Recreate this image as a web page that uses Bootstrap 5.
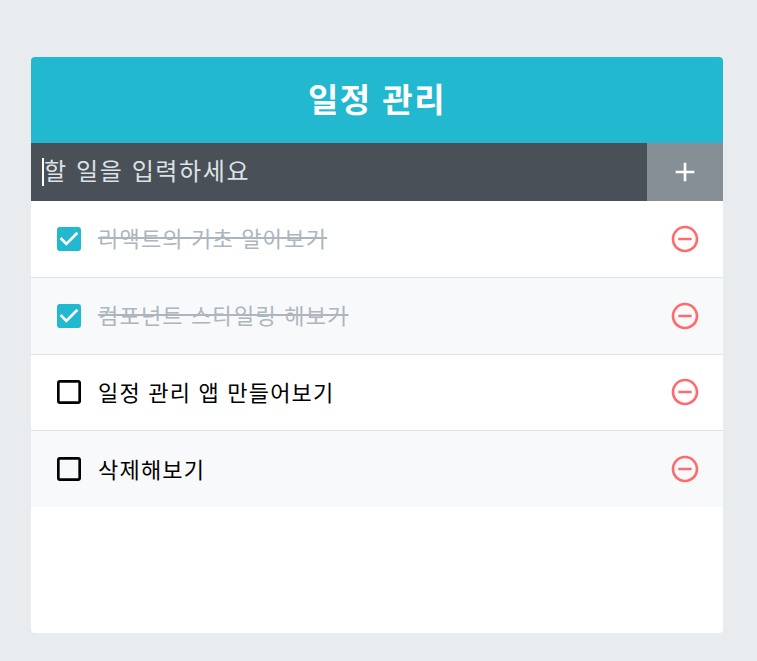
<!DOCTYPE html>
<html lang="ko">
<head>
    <meta charset="UTF-8">
    <meta name="viewport" content="width=device-width, initial-scale=1.0">
    <title>일정 관리</title>
    <link href="https://cdn.jsdelivr.net/npm/bootstrap@5.3.0/dist/css/bootstrap.min.css" rel="stylesheet">
    <style>
        html, body { height: 100%; }
        body {
            background: #e9ecef;
            font-family: "Noto Sans CJK KR", "Liberation Sans", sans-serif;
            overflow: hidden;
        }
        .todo-wrap {
            width: 692px;
            height: 576px;
            margin: 57px 0 0 31px;
            background: #fff;
            border-radius: 4px;
            overflow: hidden;
        }
        .todo-title {
            height: 86px;
            padding-bottom: 3px;
            background: #22b8cf;
            font-size: 33px;
            font-weight: 700;
            letter-spacing: 1.5px;
        }
        .todo-form { height: 58px; background: #495057; }
        .todo-input {
            padding: 0 0 5px 11px;
            font-size: 24px;
            color: #dee2e6;
            letter-spacing: 1.6px;
        }
        .caret-bar { width: 2px; height: 28px; background: #fff; margin: 5px 0 0 0; }
        .add-btn {
            width: 76px;
            padding: 0;
            background: #868e96;
            border: 0;
            border-radius: 0;
        }
        .todo-row { height: 76.75px; padding: 0 22px 0 22px; border-bottom: 1px solid #dee2e6; }
        .todo-row:nth-child(even) { background: #f8f9fa; }
        .todo-row:last-child { height: 75.75px; border-bottom: 0; }
        .todo-text { margin-left: 13px; padding-bottom: 2px; font-size: 22px; color: #000; letter-spacing: 1.2px; }
        .is-done .todo-text { color: #adb5bd; text-decoration: line-through; }
    </style>
</head>
<body>
<div class="todo-wrap">
    <div class="todo-title text-white d-flex align-items-center justify-content-center">일정 관리</div>
    <div class="todo-form d-flex">
        <div class="todo-input flex-grow-1 d-flex align-items-center"><span class="caret-bar"></span>할 일을 입력하세요</div>
        <button class="add-btn btn d-flex align-items-center justify-content-center" type="button">
            <svg width="32" height="32" viewBox="0 0 24 24" fill="#fff"><path d="M19 13h-6v6h-2v-6H5v-2h6V5h2v6h6v2z"/></svg>
        </button>
    </div>
    <div>
        <div class="todo-row is-done d-flex align-items-center">
            <svg width="32" height="32" viewBox="0 0 24 24" fill="#22b8cf"><path d="M19 3H5c-1.11 0-2 .9-2 2v14c0 1.1.89 2 2 2h14c1.11 0 2-.9 2-2V5c0-1.1-.89-2-2-2zm-9 14l-5-5 1.41-1.41L10 14.17l7.59-7.59L19 8l-9 9z"/></svg>
            <span class="todo-text flex-grow-1">리액트의 기초 알아보기</span>
            <svg width="32" height="32" viewBox="0 0 24 24" fill="#ff6b6b"><path d="M7 11v2h10v-2H7zm5-9C6.48 2 2 6.48 2 12s4.48 10 10 10 10-4.48 10-10S17.52 2 12 2zm0 18c-4.41 0-8-3.59-8-8s3.59-8 8-8 8 3.59 8 8-3.59 8-8 8z"/></svg>
        </div>
        <div class="todo-row is-done d-flex align-items-center">
            <svg width="32" height="32" viewBox="0 0 24 24" fill="#22b8cf"><path d="M19 3H5c-1.11 0-2 .9-2 2v14c0 1.1.89 2 2 2h14c1.11 0 2-.9 2-2V5c0-1.1-.89-2-2-2zm-9 14l-5-5 1.41-1.41L10 14.17l7.59-7.59L19 8l-9 9z"/></svg>
            <span class="todo-text flex-grow-1">컴포넌트 스타일링 해보기</span>
            <svg width="32" height="32" viewBox="0 0 24 24" fill="#ff6b6b"><path d="M7 11v2h10v-2H7zm5-9C6.48 2 2 6.48 2 12s4.48 10 10 10 10-4.48 10-10S17.52 2 12 2zm0 18c-4.41 0-8-3.59-8-8s3.59-8 8-8 8 3.59 8 8-3.59 8-8 8z"/></svg>
        </div>
        <div class="todo-row d-flex align-items-center">
            <svg width="32" height="32" viewBox="0 0 24 24" fill="#000"><path d="M19 5v14H5V5h14m0-2H5c-1.1 0-2 .9-2 2v14c0 1.1.9 2 2 2h14c1.1 0 2-.9 2-2V5c0-1.1-.9-2-2-2z"/></svg>
            <span class="todo-text flex-grow-1">일정 관리 앱 만들어보기</span>
            <svg width="32" height="32" viewBox="0 0 24 24" fill="#ff6b6b"><path d="M7 11v2h10v-2H7zm5-9C6.48 2 2 6.48 2 12s4.48 10 10 10 10-4.48 10-10S17.52 2 12 2zm0 18c-4.41 0-8-3.59-8-8s3.59-8 8-8 8 3.59 8 8-3.59 8-8 8z"/></svg>
        </div>
        <div class="todo-row d-flex align-items-center">
            <svg width="32" height="32" viewBox="0 0 24 24" fill="#000"><path d="M19 5v14H5V5h14m0-2H5c-1.1 0-2 .9-2 2v14c0 1.1.9 2 2 2h14c1.1 0 2-.9 2-2V5c0-1.1-.9-2-2-2z"/></svg>
            <span class="todo-text flex-grow-1">삭제해보기</span>
            <svg width="32" height="32" viewBox="0 0 24 24" fill="#ff6b6b"><path d="M7 11v2h10v-2H7zm5-9C6.48 2 2 6.48 2 12s4.48 10 10 10 10-4.48 10-10S17.52 2 12 2zm0 18c-4.41 0-8-3.59-8-8s3.59-8 8-8 8 3.59 8 8-3.59 8-8 8z"/></svg>
        </div>
    </div>
</div>
<script src="https://cdn.jsdelivr.net/npm/bootstrap@5.3.0/dist/js/bootstrap.bundle.min.js"></script>
</body>
</html>
